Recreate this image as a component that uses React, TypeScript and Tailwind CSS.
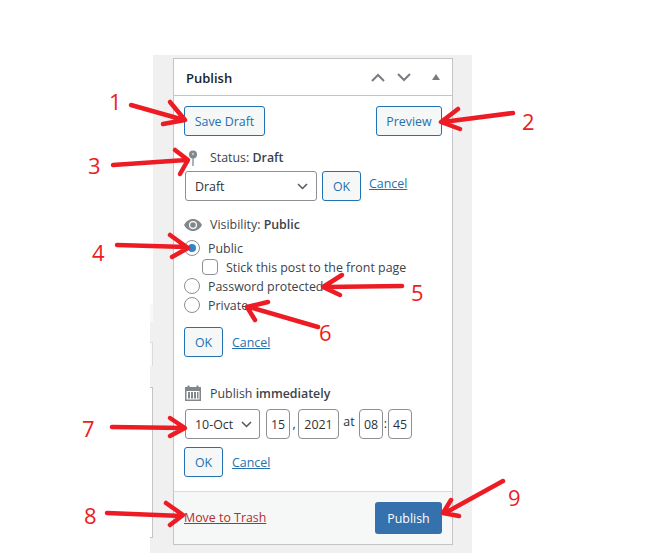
import type { ReactNode } from 'react'

const linkClass = 'text-[#2271b1] underline'

function BlueButton({ children, className = '' }: { children: ReactNode; className?: string }) {
  return (
    <button className={`h-[30px] rounded-[3px] border border-[#2271b1] bg-[#f6f7f7] pt-[2px] text-[#2271b1] ${className}`}>
      {children}
    </button>
  )
}

function Chevron() {
  return (
    <svg width="11" height="7" viewBox="0 0 11 7" fill="none" stroke="#50575e" strokeWidth="1.5">
      <path d="M1 1l4.5 4.5L10 1" />
    </svg>
  )
}

function FakeSelect({ label, className = '' }: { label: string; className?: string }) {
  return (
    <div className={`flex h-[30px] items-center justify-between rounded-[3px] border border-[#8c8f94] bg-white text-[#2c3338] ${className}`}>
      <span className="mt-[2px]">{label}</span>
      <Chevron />
    </div>
  )
}

function NumberBox({ value, className = '' }: { value: string; className?: string }) {
  return (
    <div className={`flex h-[30px] items-center justify-center rounded-[4px] border border-[#8c8f94] bg-white pt-[2px] text-[#2c3338] ${className}`}>
      {value}
    </div>
  )
}

function Radio({ label, checked = false, className = '' }: { label: string; checked?: boolean; className?: string }) {
  return (
    <label className={`flex h-4 items-center text-[#3c434a] ${className}`}>
      <span className="mr-2 flex h-4 w-4 items-center justify-center rounded-full border border-[#8c8f94] bg-white">
        {checked && <span className="h-2 w-2 rounded-full bg-[#3582c4]" />}
      </span>
      <span className="mt-[2px]">{label}</span>
    </label>
  )
}

function Annotations() {
  const arrows = [
    'M131 105L184 120M170 102L185 120L163 124',
    'M513 113L443 122M458 109L441 122L460 129',
    'M113 165L186 160M175 150L188 160L180 174',
    'M117 245L186 247M170 235L188 248L172 257',
    'M402 286L325 287M342 275L323 287L340 295',
    'M318 327L249 307M268 302L247 307L255 320',
    'M112 427L184 428M170 418L185 428L170 436',
    'M107 513L182 516M166 503L183 515L170 525',
    'M503 481L445 513M451 500L443 513L459 516',
  ]
  const numbers = [
    ['1', 'left-[109px] top-[87px]'],
    ['2', 'left-[522px] top-[107px]'],
    ['3', 'left-[88px] top-[151px]'],
    ['4', 'left-[92px] top-[238px]'],
    ['5', 'left-[411px] top-[278px]'],
    ['6', 'left-[319px] top-[318px]'],
    ['7', 'left-[82px] top-[414px]'],
    ['8', 'left-[84px] top-[501px]'],
    ['9', 'left-[508px] top-[483px]'],
  ]
  return (
    <>
      <svg className="absolute left-0 top-0" width="665" height="553" fill="none" stroke="#ed1c24" strokeWidth="4.500" strokeLinecap="round" strokeLinejoin="round">
        {arrows.map((d) => (
          <path key={d} d={d} />
        ))}
      </svg>
      {numbers.map(([n, pos]) => (
        <span key={n} className={`absolute ${pos} text-[22px] leading-[28px] text-[#ed1c24]`}>
          {n}
        </span>
      ))}
    </>
  )
}

export default function App() {
  return (
    <div className="relative h-[553px] w-[665px] overflow-hidden bg-white font-['Open_Sans',sans-serif] text-[12.4px]">
      <div className="flex h-full pl-[150px] pt-[55px]">
        {/* clipped edges of the neighbouring panels */}
        <div className="flex w-[3px] flex-col">
          <div className="h-[249px] bg-white" />
          <div className="h-[18px] bg-[#f8f8f8]" />
          <div className="h-[20px] bg-[#f0f0f1]" />
          <div className="h-[24px] border-r border-t border-[#dcdcde] bg-[#fafafa]" />
          <div className="h-[21px] bg-[#f0f0f1]" />
          <div className="h-[151px] border-b border-r border-t border-[#c3c4c7] bg-white" />
          <div className="flex-1 bg-[#f0f0f1]" />
        </div>

        <div className="h-[498px] w-[319px] bg-[#f0f0f1] pl-[20px] pt-[3px]">
          <div className="flex h-[487px] w-[280px] flex-col border border-[#c3c4c7] bg-white">
            <div className="flex h-[37px] shrink-0 items-center border-b border-[#c3c4c7] pl-3">
              <h2 className="mt-[3px] flex-1 text-[13px] font-semibold text-[#1d2327]">Publish</h2>
              <svg width="14" height="9" viewBox="0 0 14 9" fill="none" stroke="#787c82" strokeWidth="2" className="mr-[12px]">
                <path d="M1 8l6-6 6 6" />
              </svg>
              <svg width="14" height="9" viewBox="0 0 14 9" fill="none" stroke="#787c82" strokeWidth="2" className="mr-[21px]">
                <path d="M1 1l6 6 6-6" />
              </svg>
              <svg width="8" height="6" viewBox="0 0 8 6" fill="#787c82" className="mr-[12px]">
                <path d="M4 0l4 6H0z" />
              </svg>
            </div>

            <div className="flex flex-col pl-[10px] pr-[10px] pt-[10px]">
              <div className="flex justify-between">
                <BlueButton className="w-[81px]">Save Draft</BlueButton>
                <BlueButton className="w-[66px]">Preview</BlueButton>
              </div>

              <div className="mt-[14px] flex h-4 items-center text-[#3c434a]">
                <svg width="10" height="16" viewBox="0 0 10 16" className="ml-[4px] mr-[12px]">
                  <rect x="4" y="6" width="2" height="10" fill="#a7b4c0" />
                  <circle cx="5" cy="4.500" r="4" fill="#82878c" />
                  <circle cx="5" cy="4" r="1.200" fill="#c3c4c7" />
                </svg>
                <span>
                  Status: <b className="font-semibold">Draft</b>
                </span>
              </div>

              <div className="ml-px mt-[5px] flex items-center">
                <FakeSelect label="Draft" className="w-[132px] pl-[9px] pr-[8px]" />
                <BlueButton className="ml-[5px] w-[39px]">OK</BlueButton>
                <a className={`${linkClass} mb-[3px] ml-[8px]`}>Cancel</a>
              </div>

              <div className="mt-[16px] flex h-4 items-center text-[#3c434a]">
                <svg width="18" height="12" viewBox="0 0 18 12" className="mr-[8px]">
                  <path d="M9 0C5 0 2 2.500 0 6c2 3.500 5 6 9 6s7-2.500 9-6c-2-3.500-5-6-9-6z" fill="#82878c" />
                  <circle cx="9" cy="6" r="4" fill="#fff" />
                  <circle cx="9" cy="6" r="2.800" fill="#82878c" />
                </svg>
                <span>
                  Visibility: <b className="font-semibold">Public</b>
                </span>
              </div>

              <Radio label="Public" checked className="mt-[7px]" />
              <label className="ml-[18px] mt-[3px] flex h-4 items-center text-[#3c434a]">
                <span className="mr-2 h-4 w-4 rounded-[4px] border border-[#8c8f94] bg-white" />
                <span className="mt-[2px]">Stick this post to the front page</span>
              </label>
              <Radio label="Password protected" className="mt-[3px]" />
              <Radio label="Private" className="mt-[3px]" />

              <div className="mt-[14px] flex items-center">
                <BlueButton className="w-[39px]">OK</BlueButton>
                <a className={`${linkClass} ml-[9px] mt-[2px]`}>Cancel</a>
              </div>

              <div className="mt-[28px] flex h-4 items-center text-[#3c434a]">
                <svg width="16" height="16" viewBox="0 0 16 16" fill="#82878c" className="ml-px mr-[9px]">
                  <path d="M0 2h2.500V0.500h2V2h7V0.500h2V2H16v14H0zM1.500 6v8.500h13V6z" />
                  <path d="M3 7h2v6.500H3zM6 7h2v6.500H6zM9 7h2v6.500H9zM12 7h1.500v6.500H12z" />
                </svg>
                <span className="mt-[2px]">
                  Publish <b className="font-semibold">immediately</b>
                </span>
              </div>

              <div className="ml-px mt-[8px] flex items-center text-[#2c3338]">
                <FakeSelect label="10-Oct" className="w-[75px] pl-[9px] pr-[7px]" />
                <NumberBox value="15" className="ml-[6px] w-[24px]" />
                <span className="w-[8px] text-center">,</span>
                <NumberBox value="2021" className="w-[41px]" />
                <span className="mb-[3px] w-[20px] text-center">at</span>
                <NumberBox value="08" className="w-[24px]" />
                <span className="w-[5px] text-center">:</span>
                <NumberBox value="45" className="w-[24px]" />
              </div>

              <div className="mt-[8px] flex items-center">
                <BlueButton className="w-[39px]">OK</BlueButton>
                <a className={`${linkClass} ml-[9px] mt-[2px]`}>Cancel</a>
              </div>
            </div>

            <div className="mt-auto flex h-[53px] items-start justify-between border-t border-[#dcdcde] bg-[#f6f7f7] pl-[10px] pr-[10px] pt-[10px]">
              <a className="mt-[7px] text-[#b32d2e] underline">Move to Trash</a>
              <button className="h-[32px] w-[67px] rounded-[3px] bg-[#3571ad] pt-[2px] text-white">Publish</button>
            </div>
          </div>
        </div>
      </div>
      <Annotations />
    </div>
  )
}
